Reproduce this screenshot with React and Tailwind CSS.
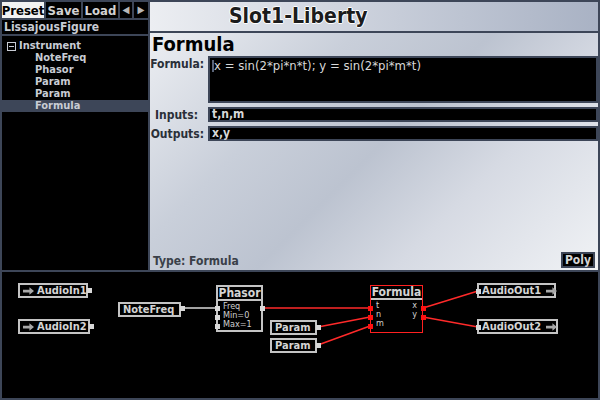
import { useState } from "react";

const font = { fontFamily: '"DejaVu Sans Condensed", "DejaVu Sans", sans-serif' };

const tabs = ["Save", "Load"];
const treeItems = ["NoteFreq", "Phasor", "Param", "Param", "Formula"];

function Arrow({ className }) {
  return (
    <svg width="11" height="8" viewBox="0 0 12 8" className={"shrink-0 " + (className || "")}>
      <path d="M0 2.5h7V0l5 4-5 4V5.5H0z" fill="#a8a8a8" />
    </svg>
  );
}

function Port({ x, y, red }) {
  return (
    <div
      className={red ? "absolute w-[5px] h-[5px] bg-[#ff1010]" : "absolute w-[5px] h-[5px] bg-[#d8d8d8]"}
      style={{ left: x, top: y }}
    />
  );
}

function SimpleNode({ left, top, width, label, arrow, arrowRight }) {
  return (
    <div
      className="absolute h-[15px] border-2 border-[#c4c4c4] bg-black flex items-center gap-[3px] px-[3px] text-[11px] font-bold leading-none whitespace-nowrap text-[#d4d4d4]"
      style={{ left, top, width }}
    >
      {arrow && <Arrow />}
      <span>{label}</span>
      {arrowRight && <Arrow className="ml-[2px]" />}
    </div>
  );
}

function BlockNode({ left, top, width, height, title, red, children }) {
  return (
    <div
      className={
        red
          ? "absolute border-[1.5px] border-[#ff2020] bg-black flex flex-col"
          : "absolute border-2 border-[#c4c4c4] bg-black flex flex-col"
      }
      style={{ left, top, width, height }}
    >
      <div className="h-[14px] flex items-center justify-center text-[12px] font-bold leading-none text-[#d4d4d4] border-b-2 border-[#c4c4c4]">
        {title}
      </div>
      <div className="flex-1 text-[9px] leading-[9px] text-[#d0d0d0]">{children}</div>
    </div>
  );
}

export default function App() {
  const [selected] = useState(4);

  return (
    <div className="w-[600px] h-[400px] bg-[#3d4658] p-[2px] flex flex-col gap-[2px]" style={font}>
      <div className="h-[268px] flex gap-[2px]">
        {/* left column */}
        <div className="w-[146px] flex flex-col gap-[2px]">
          <div className="h-[16px] flex gap-[2px] text-[13px] font-bold leading-none">
            <div className="w-[42px] bg-[#f2f2f2] text-black flex items-center justify-center">Preset</div>
            {tabs.map((t) => (
              <div key={t} className="w-[35px] bg-black text-[#d2d2d2] flex items-center justify-center">
                {t}
              </div>
            ))}
            <div className="w-[12px] bg-black text-[#b8b8b8] text-[10px] flex items-center justify-center">◀</div>
            <div className="flex-1 bg-black text-[#b8b8b8] text-[10px] flex items-center justify-center">▶</div>
          </div>
          <div className="h-[14px] bg-black text-[#c8ccd4] text-[12px] font-bold leading-none flex items-center px-[2px]">
            LissajousFigure
          </div>
          <div className="flex-1 bg-black pt-[4px] text-[11px] font-bold leading-[12px] text-[#c8ccd4]">
            <div className="h-[12px] flex items-center gap-[3px] pl-[5px]">
              <span className="w-[9px] h-[9px] border border-[#c8ccd4] flex items-center justify-center">
                <span className="w-[5px] h-[1px] bg-[#c8ccd4]" />
              </span>
              Instrument
            </div>
            {treeItems.map((item, i) => (
              <div
                key={i}
                className={i === selected ? "h-[12px] pl-[33px] bg-[#3d4658]" : "h-[12px] pl-[33px]"}
              >
                {item}
              </div>
            ))}
          </div>
        </div>

        {/* right column */}
        <div className="flex-1 flex flex-col gap-[2px]">
          <div className="h-[29px] bg-gradient-to-r from-[#eceef2] to-[#a9b2c4] flex items-center pl-[79px]">
            <span
              className="text-[21px] font-bold text-[#1c1c1c] leading-none"
              style={{ textShadow: "1px 0 #fff, -1px 0 #fff, 0 1px #fff, 0 -1px #fff" }}
            >
              Slot1-Liberty
            </span>
          </div>
          <div className="flex-1 bg-[linear-gradient(135deg,#eceef2_0%,#c9cfda_30%,#bcc3d0_50%,#d6dae3_70%,#f0f2f5_100%)] flex flex-col text-[#2a2f38]">
            <div className="h-[22px] pl-[2px] text-[20px] font-bold leading-[22px] text-black">Formula</div>
            <div className="flex flex-col gap-[4px] pt-[1px]">
              <div className="flex gap-[4px]">
                <div className="w-[54px] text-right text-[12px] font-bold leading-[14px] pt-[1px]">Formula:</div>
                <div className="flex-1 h-[47px] bg-black border-2 border-[#3d4658] flex items-start pl-[2px] pt-[1px] text-[13px] leading-[14px] text-[#d8d8d8]">
                  <span className="w-[2px] h-[12px] bg-[#5a6478] mt-[1px]" />
                  x = sin(2*pi*n*t); y = sin(2*pi*m*t)
                </div>
              </div>
              <div className="flex gap-[4px] items-center">
                <div className="w-[54px] text-right text-[12px] font-bold leading-[14px] pr-[6px]">Inputs:</div>
                <div className="flex-1 h-[15px] bg-black border-2 border-[#3d4658] text-[12px] leading-[11px] pl-[2px] text-[#d8d8d8] font-bold">
                  t,n,m
                </div>
              </div>
              <div className="flex gap-[4px] items-center">
                <div className="w-[54px] text-right text-[12px] font-bold leading-[14px]">Outputs:</div>
                <div className="flex-1 h-[15px] bg-black border-2 border-[#3d4658] text-[12px] leading-[11px] pl-[2px] text-[#d8d8d8] font-bold">
                  x,y
                </div>
              </div>
            </div>
            <div className="mt-auto flex items-end justify-between pl-[3px] pr-[3px] pb-[2px]">
              <span className="text-[12px] font-bold text-[#3a3f48] leading-[14px]">Type: Formula</span>
              <span className="h-[16px] px-[2px] bg-black border-2 border-[#3d4658] text-[12px] font-bold text-[#d4d4d4] leading-[12px]">
                Poly
              </span>
            </div>
          </div>
        </div>
      </div>

      {/* graph canvas */}
      <div className="flex-1 bg-black relative overflow-hidden">
        <svg width="596" height="126" className="absolute left-0 top-0">
          <line x1="181" y1="36" x2="214" y2="36" stroke="#d8d8d8" strokeWidth="1.5" />
          <g stroke="#ff2a2a" strokeWidth="1.5">
            <line x1="261" y1="36" x2="368" y2="36" />
            <line x1="316" y1="55" x2="368" y2="45" />
            <line x1="316" y1="73" x2="368" y2="54" />
            <line x1="421" y1="36" x2="476" y2="19" />
            <line x1="421" y1="45" x2="476" y2="55" />
          </g>
        </svg>

        <SimpleNode left={16} top={11} width={70} label="AudioIn1" arrow />
        <Port x={85} y={16} />
        <SimpleNode left={16} top={47} width={72} label="AudioIn2" arrow />
        <Port x={87} y={52} />
        <SimpleNode left={116} top={30} width={63} label="NoteFreq" />
        <Port x={178} y={34} />

        <BlockNode left={214} top={13} width={47} height={47} title="Phasor">
          <div className="pl-[5px] pt-[1px]">Freq</div>
          <div className="pl-[5px]">Min=0</div>
          <div className="pl-[5px]">Max=1</div>
        </BlockNode>
        <Port x={213} y={34} />
        <Port x={213} y={43} />
        <Port x={213} y={52} />
        <Port x={258} y={34} />

        <BlockNode left={368} top={13} width={53} height={48} title="Formula" red>
          <div className="flex justify-between px-[5px] pt-[1px]"><span>t</span><span>x</span></div>
          <div className="flex justify-between px-[5px]"><span>n</span><span>y</span></div>
          <div className="px-[5px]">m</div>
        </BlockNode>
        <Port x={366} y={34} red />
        <Port x={366} y={43} red />
        <Port x={366} y={52} red />
        <Port x={419} y={34} red />
        <Port x={419} y={43} red />

        <SimpleNode left={268} top={48} width={47} label="Param" />
        <Port x={314} y={53} />
        <SimpleNode left={268} top={66} width={47} label="Param" />
        <Port x={314} y={71} />

        <SimpleNode left={475} top={11} width={79} label="AudioOut1" arrowRight />
        <Port x={474} y={17} />
        <SimpleNode left={475} top={47} width={81} label="AudioOut2" arrowRight />
        <Port x={474} y={53} />
      </div>
    </div>
  );
}
